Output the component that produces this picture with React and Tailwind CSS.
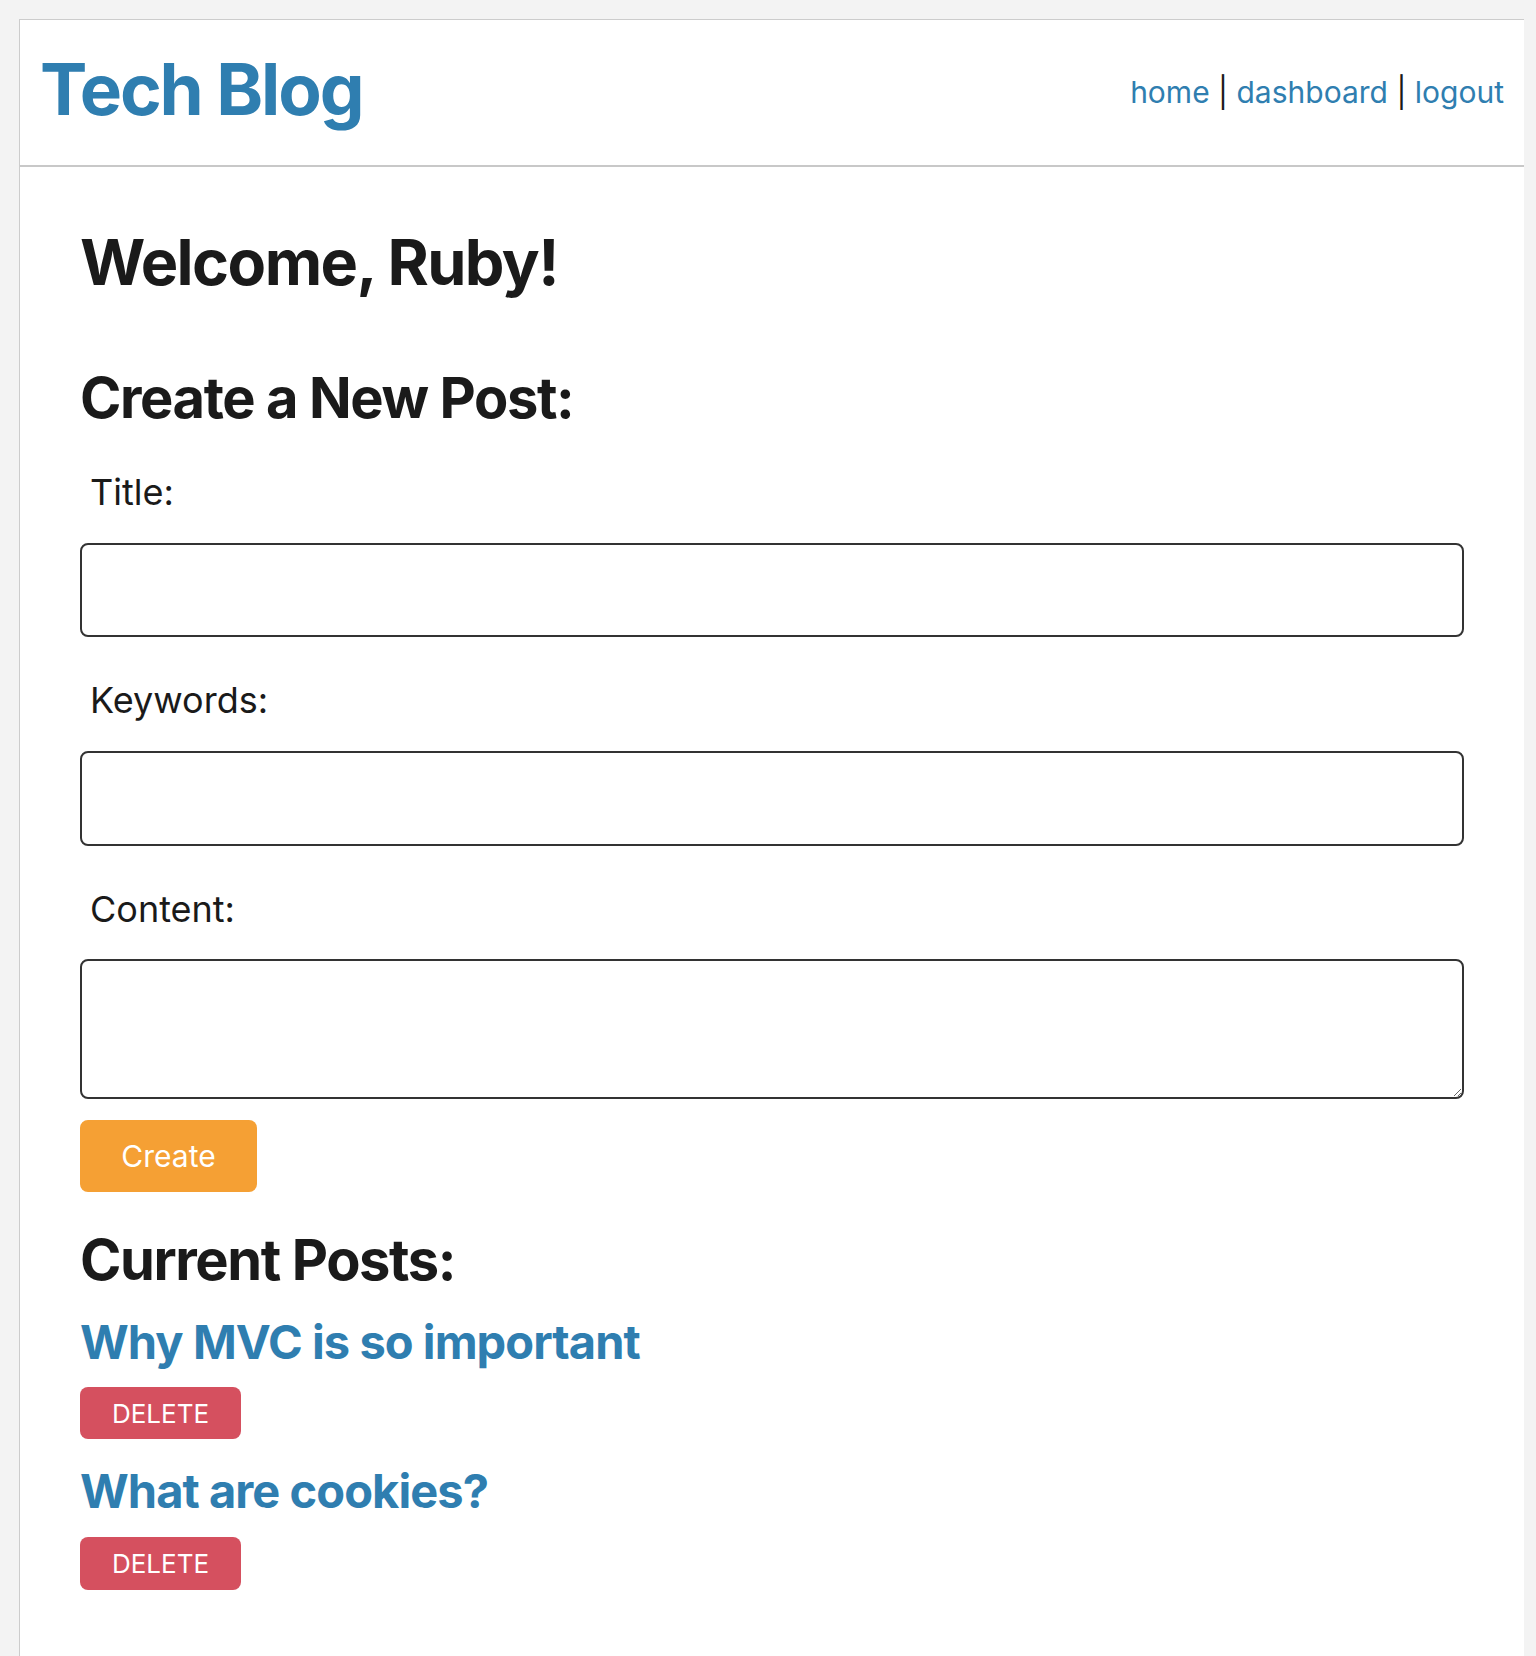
import React from "react";

export default function App() {
  const font = { fontFamily: "Inter, 'Noto Sans', 'Liberation Sans', sans-serif" };
  return (
    <div className="min-h-[1656px] bg-[#f3f3f3] pt-[19px] pl-[19px] pr-[12px]" style={font}>
      <div className="min-h-[1637px] bg-white border-l border-t border-[#cccccc]">
        <header className="h-[147px] border-b-2 border-[#c8c8c8] flex items-center justify-between pl-[20px] pr-[20px]">
          <h1 className="text-[71px] leading-[80px] font-bold tracking-[-0.03em] text-[#2f7eb0] mb-[8px]">
            Tech Blog
          </h1>
          <nav className="text-[30px] leading-[40px] text-[#1a1a1a] mb-[2px]">
            <a className="text-[#2f7eb0]">home</a> | <a className="text-[#2f7eb0]">dashboard</a> |{" "}
            <a className="text-[#2f7eb0]">logout</a>
          </nav>
        </header>
        <main className="px-[60px] pb-[60px] text-[#1a1a1a]">
          <h2 className="mt-[55px] text-[63px] leading-[80px] font-bold tracking-[-0.025em]">Welcome, Ruby!</h2>
          <h3 className="mt-[64px] text-[56px] leading-[64px] font-bold tracking-[-0.025em]">Create a New Post:</h3>
          <form className="flex flex-col">
            <label className="mt-[42px] ml-[10px] text-[36px] leading-[40px]">Title:</label>
            <input className="mt-[31px] h-[94px] w-full rounded-[8px] border-2 border-[#333333] bg-white" />
            <label className="mt-[43px] ml-[10px] text-[36px] leading-[40px]">Keywords:</label>
            <input className="mt-[31px] h-[95px] w-full rounded-[8px] border-2 border-[#333333] bg-white" />
            <label className="mt-[43px] ml-[10px] text-[36px] leading-[40px]">Content:</label>
            <textarea className="mt-[30px] h-[140px] w-full rounded-[8px] border-2 border-[#333333] bg-white" />
            <div>
              <button
                type="button"
                className="mt-[21px] h-[72px] w-[177px] rounded-[8px] bg-[#f5a034] text-white text-[30px]"
              >
                Create
              </button>
            </div>
          </form>
          <h3 className="mt-[38px] text-[56px] leading-[60px] font-bold tracking-[-0.025em]">Current Posts:</h3>
          <div className="flex flex-col">
            <a className="mt-[24px] text-[47px] leading-[56px] font-bold tracking-[-0.02em] text-[#2f7eb0]">
              Why MVC is so important
            </a>
            <div>
              <button
                type="button"
                className="mt-[17px] h-[52px] w-[161px] rounded-[8px] bg-[#d5505f] text-white text-[26px]"
              >
                DELETE
              </button>
            </div>
            <a className="mt-[24px] text-[47px] leading-[56px] font-bold tracking-[-0.02em] text-[#2f7eb0]">
              What are cookies?
            </a>
            <div>
              <button
                type="button"
                className="mt-[18px] h-[53px] w-[161px] rounded-[8px] bg-[#d5505f] text-white text-[26px]"
              >
                DELETE
              </button>
            </div>
          </div>
        </main>
      </div>
    </div>
  );
}
